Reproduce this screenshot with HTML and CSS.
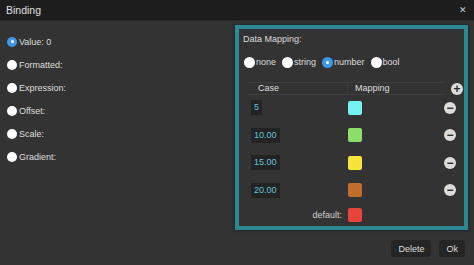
FILE: index.html
```html
<!DOCTYPE html>
<html lang="en">
  <head>
    <meta charset="UTF-8" />
    <title>Binding</title>
    <link rel="stylesheet" href="styles.css">
  </head>
  <body>
    <div class="dialog">
      <div class="titlebar">
        <span class="title">Binding</span>
        <span class="close">&#x2715;</span>
      </div>

      <div class="content">
        <div class="options">
          <label class="opt"><span class="radio checked"></span>Value: 0</label>
          <label class="opt"><span class="radio"></span>Formatted:</label>
          <label class="opt"><span class="radio"></span>Expression:</label>
          <label class="opt"><span class="radio"></span>Offset:</label>
          <label class="opt"><span class="radio"></span>Scale:</label>
          <label class="opt"><span class="radio"></span>Gradient:</label>
        </div>

        <div class="mapping">
          <div class="mapping-title">Data Mapping:</div>
          <div class="types">
            <label class="type"><span class="radio"></span>none</label>
            <label class="type"><span class="radio"></span>string</label>
            <label class="type"><span class="radio checked"></span>number</label>
            <label class="type"><span class="radio"></span>bool</label>
          </div>

          <div class="table">
            <div class="thead">
              <div class="th case-col">Case</div>
              <div class="th map-col">Mapping</div>
              <div class="act"><span class="round-btn">+</span></div>
            </div>
            <div class="row">
              <div class="case-col"><span class="case">5</span></div>
              <div class="map-col"><span class="swatch cyan"></span></div>
              <div class="act"><span class="round-btn">&minus;</span></div>
            </div>
            <div class="row">
              <div class="case-col"><span class="case">10.00</span></div>
              <div class="map-col"><span class="swatch green"></span></div>
              <div class="act"><span class="round-btn">&minus;</span></div>
            </div>
            <div class="row">
              <div class="case-col"><span class="case">15.00</span></div>
              <div class="map-col"><span class="swatch yellow"></span></div>
              <div class="act"><span class="round-btn">&minus;</span></div>
            </div>
            <div class="row">
              <div class="case-col"><span class="case">20.00</span></div>
              <div class="map-col"><span class="swatch orange"></span></div>
              <div class="act"><span class="round-btn">&minus;</span></div>
            </div>
            <div class="row default-row">
              <div class="case-col default-label">default:</div>
              <div class="map-col"><span class="swatch red"></span></div>
              <div class="act"></div>
            </div>
          </div>
        </div>
      </div>

      <div class="footer">
        <button class="btn">Delete</button>
        <button class="btn">Ok</button>
      </div>
    </div>
  </body>
</html>
```

FILE: styles.css
```css
body {
  margin: 0;
  padding: 0;
  background: #333333;
  font-family: "Liberation Sans", Arial, sans-serif;
  color: #dddddd;
}

.dialog {
  width: 474px;
  height: 265px;
  display: flex;
  flex-direction: column;
  background: #333333;
}

.titlebar {
  height: 20px;
  background: #1d1d1d;
  border-bottom: 1px solid #2a2a2a;
  display: flex;
  align-items: center;
  justify-content: space-between;
  padding: 0 7px 0 6px;
  font-size: 10.5px;
  color: #e0e0e0;
}

.close {
  font-size: 9px;
  color: #cccccc;
}

.content {
  display: flex;
  height: 209px;
}

/* left column of binding kinds */
.options {
  width: 235px;
  padding-top: 9px;
  display: flex;
  flex-direction: column;
}

.opt {
  height: 23px;
  display: flex;
  align-items: center;
  padding-left: 7px;
  font-size: 9px;
}

.radio {
  width: 10px;
  height: 10px;
  border-radius: 50%;
  background: #ffffff;
  margin-right: 2px;
  flex-shrink: 0;
  position: relative;
}

.radio.checked {
  background: #3f97e8;
}

.radio.checked::after {
  content: "";
  position: absolute;
  left: 3.5px;
  top: 3.5px;
  width: 3px;
  height: 3px;
  border-radius: 50%;
  background: #ffffff;
}

/* teal framed mapping panel */
.mapping {
  margin-top: 4px;
  width: 221px;
  height: 197px;
  border: 4px solid #2e8893;
  box-shadow: 0 0 2px 1px #1a2a2e;
  padding: 0 0 0 4px;
  font-size: 9px;
}

.mapping-title {
  height: 18px;
  display: flex;
  align-items: center;
  margin-top: 1px;
}

.types {
  display: flex;
  align-items: center;
  height: 26px;
  margin-top: 1px;
  padding-left: 1px;
}

.type {
  display: flex;
  align-items: center;
  margin-right: 6px;
}

.type .radio {
  width: 11px;
  height: 11px;
  margin-right: 1px;
}

.type .radio.checked::after {
  left: 4px;
  top: 4px;
}

.table {
  margin-left: 5px;
  margin-top: 7px;
}

.thead,
.row {
  display: flex;
  align-items: center;
}

.thead {
  height: 12px;
}

.th {
  height: 11px;
  border-top: 1px solid #3e3e3e;
  border-bottom: 1px solid #3e3e3e;
  display: flex;
  align-items: center;
}

.case-col {
  width: 99px;
  flex-shrink: 0;
}

.map-col {
  width: 96px;
  flex-shrink: 0;
}

.th.case-col {
  padding-left: 10px;
  width: 89px;
  border-right: 1px solid #3e3e3e;
}

.th.map-col {
  padding-left: 7px;
  width: 89px;
}

.act {
  flex: 1;
  display: flex;
  justify-content: flex-start;
}

.thead .act {
  padding-left: 7px;
  margin-top: 2px;
}

.row {
  height: 27.5px;
}

.row:first-of-type {
  margin-top: 2px;
}

.row .act {
  padding-left: 1px;
}

.case {
  display: inline-block;
  background: #232323;
  color: #62c6d4;
  padding: 0 3px;
  height: 15px;
  line-height: 15px;
  margin-left: 3px;
  font-size: 9px;
}

.swatch {
  display: block;
  width: 14px;
  height: 14px;
  border-radius: 2px;
  margin-left: 1px;
}

.cyan { background: #74f2f4; }
.green { background: #8ddf69; }
.yellow { background: #f6e43c; }
.orange { background: #bf6e2c; }
.red { background: #e6443a; }

.default-row {
  height: 22px;
}

.default-label {
  text-align: right;
  padding-right: 5px;
  width: 94px;
  color: #cfcfcf;
}

.round-btn {
  width: 12px;
  height: 12px;
  border-radius: 50%;
  background: #dcdcdc;
  color: #2a2a2a;
  font-weight: bold;
  font-size: 12px;
  line-height: 12px;
  text-align: center;
  display: inline-block;
}

.footer {
  flex: 1;
  display: flex;
  justify-content: flex-end;
  align-items: center;
  padding-right: 9px;
  gap: 8px;
}

.btn {
  font-family: "Liberation Sans", Arial, sans-serif;
  background: #252525;
  border: none;
  border-radius: 3px;
  color: #dddddd;
  font-size: 9px;
  height: 17px;
  padding: 0 7px;
  margin-top: 2px;
}
```
